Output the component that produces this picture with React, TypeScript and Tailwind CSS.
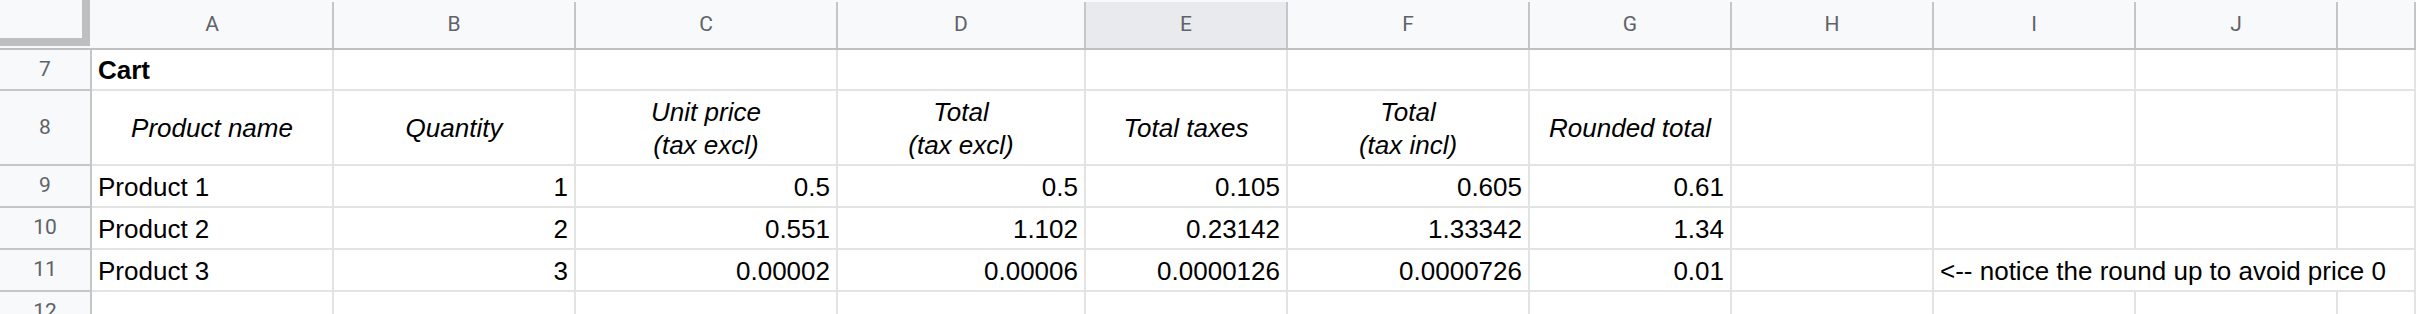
import React from "react";

const COLS = ["A", "B", "C", "D", "E", "F", "G", "H", "I", "J", ""];

type Cell = {
  text?: string;
  align?: "left" | "right" | "center";
  bold?: boolean;
  head?: boolean;
  span?: number;
};

const num = (text: string): Cell => ({ text, align: "right" });
const head = (text: string): Cell => ({ text, head: true, align: "center" });

const ROWS: { n: number; cells: Cell[] }[] = [
  { n: 7, cells: [{ text: "Cart", bold: true }] },
  {
    n: 8,
    cells: [
      head("Product name"),
      head("Quantity"),
      head("Unit price\n(tax excl)"),
      head("Total\n(tax excl)"),
      head("Total taxes"),
      head("Total\n(tax incl)"),
      head("Rounded total"),
    ],
  },
  {
    n: 9,
    cells: [{ text: "Product 1" }, num("1"), num("0.5"), num("0.5"), num("0.105"), num("0.605"), num("0.61")],
  },
  {
    n: 10,
    cells: [{ text: "Product 2" }, num("2"), num("0.551"), num("1.102"), num("0.23142"), num("1.33342"), num("1.34")],
  },
  {
    n: 11,
    cells: [
      { text: "Product 3" },
      num("3"),
      num("0.00002"),
      num("0.00006"),
      num("0.0000126"),
      num("0.0000726"),
      num("0.01"),
      {},
      { text: "<-- notice the round up to avoid price 0", span: 3 },
    ],
  },
  { n: 12, cells: [] },
];

// pad every row out to the 11 visible columns
function fillRow(cells: Cell[]): Cell[] {
  const out = [...cells];
  let used = out.reduce((s, c) => s + (c.span ?? 1), 0);
  while (used < COLS.length) {
    out.push({});
    used++;
  }
  return out;
}

function DataCell({ cell }: { cell: Cell }) {
  const base = "border-r-2 border-b-2 border-[#e2e3e3] bg-white text-black text-[26px] overflow-visible whitespace-nowrap";
  if (cell.head) {
    return (
      <div className={`${base} flex items-center justify-center text-center italic leading-[33px] whitespace-pre-line pt-[2px]`}>
        {cell.text}
      </div>
    );
  }
  const justify = cell.align === "right" ? "justify-end pr-[6px]" : "justify-start pl-[6px]";
  return (
    <div
      className={`${base} flex items-end ${justify} pb-[4px] leading-[30px] ${cell.bold ? "font-bold" : ""} ${
        cell.span === 3 ? "col-span-3" : ""
      }`}
    >
      {cell.text}
    </div>
  );
}

export default function App() {
  return (
    <div
      className="h-[314px] w-[2416px] overflow-hidden bg-white"
      style={{ fontFamily: '"Liberation Sans", Arial, sans-serif' }}
    >
      <div className="grid grid-cols-[92px_242px_242px_262px_248px_202px_242px_202px_202px_202px_202px_1fr] grid-rows-[50px_41px_75px_42px_42px_42px_42px]">
        {/* corner with freeze handles */}
        <div className="bg-[#f8f9fa] border-b-2 border-[#c0c0c0]">
          <div className="w-[90px] h-[46px] border-r-8 border-b-8 border-[#bfbfbf]" />
        </div>
        {COLS.map((c, i) => (
          <div key={i} className="bg-[#f8f9fa] border-b-2 border-[#c0c0c0] pt-[2px]">
            <div
              className={`h-full border-r-2 border-[#c4c7c5] flex items-center justify-center text-[21px] text-[#5f6368] ${
                c === "E" ? "bg-[#e8eaed]" : ""
              }`}
              style={{ fontFamily: "Roboto, Arial, sans-serif" }}
            >
              {c}
            </div>
          </div>
        ))}

        {ROWS.map((row) => (
          <React.Fragment key={row.n}>
            <div
              className="bg-[#f8f9fa] border-r-2 border-b-2 border-[#c4c7c5] flex items-center justify-center text-[21px] text-[#5f6368]"
              style={{ fontFamily: "Roboto, Arial, sans-serif" }}
            >
              {row.n}
            </div>
            {fillRow(row.cells).map((cell, i) => (
              <DataCell key={i} cell={cell} />
            ))}
          </React.Fragment>
        ))}
      </div>
    </div>
  );
}
